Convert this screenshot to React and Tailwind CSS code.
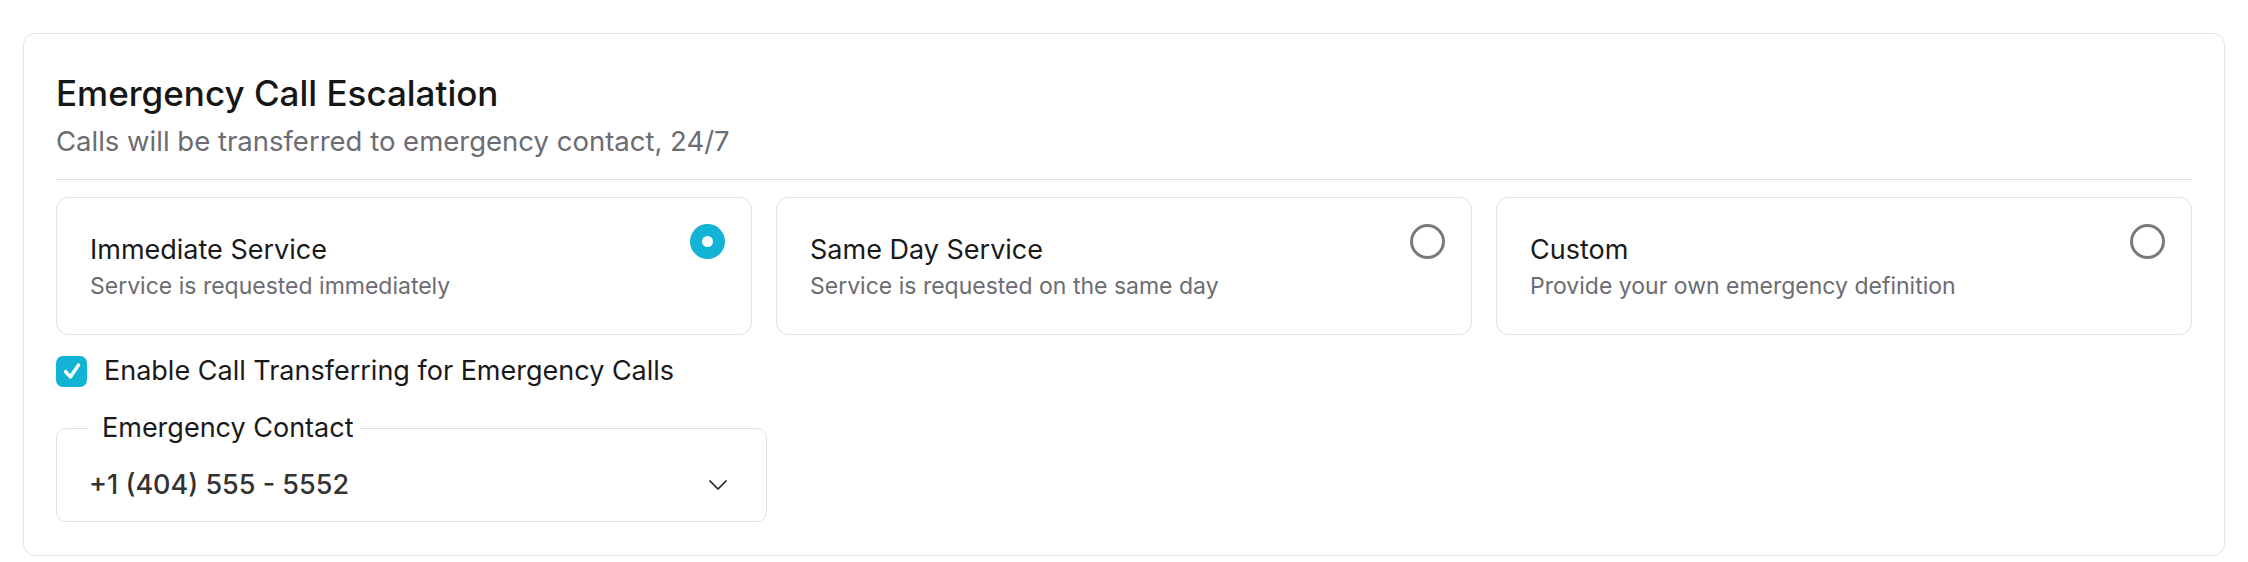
import { useState } from 'react';

const options = [
   { id: 'immediate', title: 'Immediate Service', desc: 'Service is requested immediately' },
   { id: 'same-day', title: 'Same Day Service', desc: 'Service is requested on the same day' },
   { id: 'custom', title: 'Custom', desc: 'Provide your own emergency definition' },
];

function Radio({ checked }) {
   if (checked) {
      return (
         <span className="flex items-center justify-center w-[35px] h-[35px] rounded-full bg-[#12b3d4]">
            <span className="w-[11px] h-[11px] rounded-full bg-white" />
         </span>
      );
   }
   return <span className="block w-[35px] h-[35px] rounded-full border-[3px] border-[#7a7a7a]" />;
}

export default function App() {
   const [selected, setSelected] = useState('immediate');
   const [transfer, setTransfer] = useState(true);

   return (
      <div className="min-h-screen bg-white pt-[33px] px-[23px] font-['Inter',sans-serif]">
         <div className="border border-[#e3e3e3] rounded-[12px] px-[32px] pt-[37px] pb-[33px]">
            <h2 className="text-[35px] leading-[44px] font-medium text-[#161616]">Emergency Call Escalation</h2>
            <p className="mt-[8px] text-[27.5px] leading-[36px] text-[#6c6c72]">
               Calls will be transferred to emergency contact, 24/7
            </p>

            <div className="mt-[20px] h-px bg-[#e0e0e0]" />

            <div className="mt-[17px] grid grid-cols-3 gap-[24px]">
               {options.map((o) => (
                  <button
                     key={o.id}
                     type="button"
                     onClick={() => setSelected(o.id)}
                     className="flex h-[138px] items-start justify-between border border-[#e2e2e2] rounded-[12px] pl-[33px] pr-[26px] py-[26px] text-left"
                  >
                     <div className="self-center mt-[3px]">
                        <div className="text-[27px] leading-[32px] text-[#1a1a1a]">{o.title}</div>
                        <div className="mt-[5px] text-[23px] leading-[30px] text-[#6c6c72]">{o.desc}</div>
                     </div>
                     <Radio checked={selected === o.id} />
                  </button>
               ))}
            </div>

            <label className="mt-[20px] flex items-center gap-[17px] cursor-pointer">
               <button
                  type="button"
                  onClick={() => setTransfer(!transfer)}
                  className={`flex items-center justify-center w-[31px] h-[31px] rounded-[7px] ${transfer ? 'bg-[#12b3d4]' : 'border-2 border-[#777777]'}`}
               >
                  {transfer && (
                     <svg width="26" height="26" viewBox="0 0 24 24" fill="none" stroke="white" strokeWidth="3.2" strokeLinecap="round" strokeLinejoin="round">
                        <polyline points="6 12.5 10.5 17.5 18 6.5" />
                     </svg>
                  )}
               </button>
               <span className="text-[27px] leading-[32px] text-[#1a1a1a]">Enable Call Transferring for Emergency Calls</span>
            </label>

            <fieldset className="mt-[25px] w-[711px] border border-[#e0e0e0] rounded-[10px] px-[32px] pt-[25px] pb-[20px]">
               <legend className="pl-[13px] pr-[5px] text-[27px] leading-[32px] text-[#1a1a1a]">Emergency Contact</legend>
               <div className="flex items-center justify-between">
                  <span className="text-[27px] leading-[32px] font-medium text-[#333333]">+1 (404) 555 - 5552</span>
                  <svg width="32" height="32" viewBox="0 0 24 24" fill="none" stroke="#222222" strokeWidth="1.3" strokeLinecap="round" strokeLinejoin="round">
                     <path d="m6 9 6 6 6-6" />
                  </svg>
               </div>
            </fieldset>
         </div>
      </div>
   );
}
